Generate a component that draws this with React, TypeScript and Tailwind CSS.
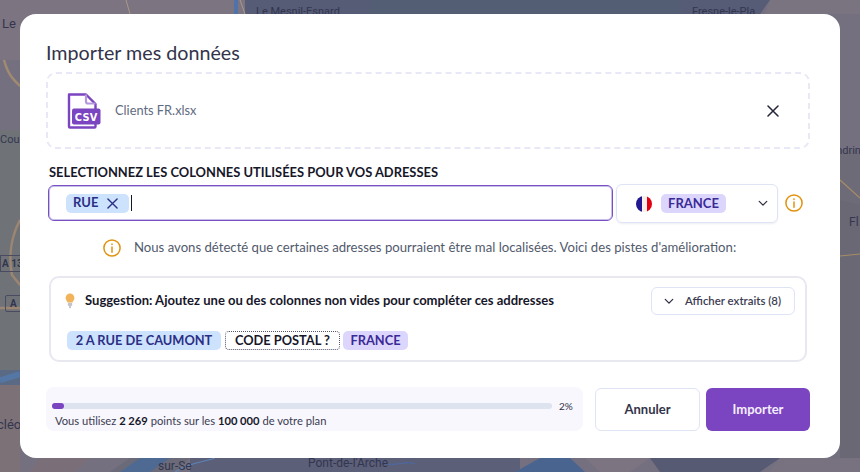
import React from "react";

const mapText = "absolute text-[#33364f] font-['Roboto',sans-serif] whitespace-nowrap";

function MapBackground() {
  return (
    <div className="absolute inset-0 overflow-hidden bg-[#767080]">
      <svg width="860" height="472" viewBox="0 0 860 472" className="absolute inset-0">
        <rect width="860" height="472" fill="#757080" />
        <path d="M0 0H250V60H0Z" fill="#7c7480" />
        <path d="M245 0H690V14H245Z" fill="#565b76" />
        <path d="M370 0H680V14H370Z" fill="#535d74" />
        <path d="M690 0H770L760 14H685Z" fill="#565b76" />
        <path d="M770 0H860V14H765Z" fill="#797480" />
        <path d="M0 130H20V370H0Z" fill="#6f7378" />
        <path d="M0 370H20V385H0Z" fill="#5a6a85" />
        <path d="M0 385H20V472H0Z" fill="#7d7178" />
        <path d="M840 150H860V472H840Z" fill="#6e6b78" />
        <path d="M840 200L860 205V470H840Z" fill="#6a6875" />
        <path d="M40 458H90L75 472H30Z" fill="#7a6f78" />
        <path d="M130 458H190L175 472H110Z" fill="#6a6a78" />
        <path d="M190 458H520V472H190Z" fill="#5c5f78" />
        <path d="M120 472L140 458H170L150 472Z" fill="#4f6a92" />
        <path d="M515 472L540 458H570L585 472Z" fill="#4a6490" />
        <path d="M585 458H650L630 472H600Z" fill="#7c7480" />
        <path d="M650 458H780L760 472H660Z" fill="#565a72" />
        <path d="M780 458H860V472H770Z" fill="#787280" />
        <path d="M0 380C8 378 14 376 20 374" stroke="#5577a5" strokeWidth="6" fill="none" />
        <path d="M4 60C8 75 14 80 20 86" stroke="#a08a70" strokeWidth="2.5" fill="none" />
        <path d="M20 220C12 235 8 255 12 275L20 285" stroke="#9c8672" strokeWidth="2.5" fill="none" />
        <path d="M0 308H20" stroke="#9c8672" strokeWidth="2.5" />
        <path d="M840 180L860 198" stroke="#a88c68" strokeWidth="1.2" fill="none" />
        <path d="M840 256L860 254" stroke="#a88c68" strokeWidth="1.2" fill="none" />
        <path d="M240 0L245 14M126 0L130 14" stroke="#a89a88" strokeWidth="1" />
        <path d="M236 0V14" stroke="#4f72a8" strokeWidth="4" />
        <path d="M175 472C190 462 205 462 215 458" stroke="#5b84b8" strokeWidth="1.2" fill="none" />
        <path d="M380 462C395 468 405 460 415 464" stroke="#4070c0" strokeWidth="1" strokeDasharray="2 1" fill="none" />
      </svg>
      <span className={`${mapText} left-[2px] top-[14px] text-[13px]`}>Le</span>
      <span className={`${mapText} left-[256px] top-[4px] text-[11px]`}>Le Mesnil-Esnard</span>
      <span className={`${mapText} left-[692px] top-[4px] text-[11px]`}>Fresne-le-Pla</span>
      <span className={`${mapText} left-0 top-[132px] text-[11px]`}>Cou</span>
      <span className={`${mapText} left-0 top-[255px] text-[10px] font-bold px-[1px] border border-[#4a4a60]`}>A 139</span>
      <span className={`${mapText} left-[5px] top-[295px] text-[10px] font-bold px-[4px] border border-[#4a4a60] rounded-[2px]`}>A 13</span>
      <span className={`${mapText} left-[-3px] top-[415px] text-[13px]`}>cléon</span>
      <span className={`${mapText} left-[158px] top-[457px] text-[12px]`}>sur-Se</span>
      <span className={`${mapText} left-[308px] top-[454px] text-[12px]`}>Pont-de-l'Arche</span>
      <span className={`${mapText} left-[829px] top-[143px] text-[11px]`}>Andrin</span>
      <span className={`${mapText} left-[849px] top-[213px] text-[12px]`}>Fl</span>
    </div>
  );
}

function Info({ className }: { className: string }) {
  return (
    <svg viewBox="0 0 18 18" className={className} fill="none" stroke="#e0930f" strokeWidth="1.5" strokeLinecap="round">
      <circle cx="9" cy="9" r="8.1" />
      <path d="M9 8v5.2" />
      <path d="M9 4.9v.6" />
    </svg>
  );
}

function CsvIcon() {
  return (
    <svg width="34" height="36" viewBox="0 0 34 36" className="shrink-0">
      <path d="M2 1.5H19L28.5 11V33.5a1 1 0 0 1-1 1H3a1 1 0 0 1-1-1Z" fill="none" stroke="#7b44c0" strokeWidth="2.4" strokeLinejoin="round" />
      <path d="M19 1.5V8.5a2 2 0 0 0 2 2H28.5" fill="none" stroke="#b597de" strokeWidth="2.2" />
      <rect x="5" y="15.5" width="28.5" height="16" rx="2" fill="#7b44c0" />
      <text x="19.2" y="27.6" textAnchor="middle" fontFamily="'DejaVu Sans',sans-serif" fontWeight="700" fontSize="9.8" fill="#fff" letterSpacing="0.3">CSV</text>
    </svg>
  );
}

function Flag() {
  return (
    <svg width="16" height="16" viewBox="0 0 16 16" className="shrink-0">
      <defs>
        <clipPath id="flag"><circle cx="8" cy="8" r="8" /></clipPath>
      </defs>
      <g clipPath="url(#flag)">
        <rect width="6" height="16" fill="#22188f" />
        <rect x="6" width="5" height="16" fill="#f8f0ea" />
        <rect x="11" width="5" height="16" fill="#e3000f" />
      </g>
    </svg>
  );
}

function Chevron({ className }: { className: string }) {
  return (
    <svg viewBox="0 0 12 8" className={className} fill="none" stroke="#2c2c44" strokeWidth="1.5" strokeLinecap="round" strokeLinejoin="round">
      <path d="M1.5 1.5 6 6l4.5-4.5" />
    </svg>
  );
}

function Bulb() {
  return (
    <svg width="10" height="16" viewBox="0 0 10 16" className="shrink-0">
      <path d="M5 .5a4.4 4.4 0 0 1 4.4 4.4c0 1.9-1.4 2.9-2 4.6H2.6C2 7.8.6 6.8.6 4.9A4.4 4.4 0 0 1 5 .5Z" fill="#f2b45a" />
      <rect x="2.8" y="9.8" width="4.4" height="3.2" rx="1" fill="#c6c2cc" />
      <path d="M3.8 13.6h2.4L5 15.5Z" fill="#9a96a4" />
    </svg>
  );
}

export default function App() {
  return (
    <div className="relative h-[472px] w-[860px] overflow-hidden font-['Lato',sans-serif]">
      <MapBackground />
      <div className="relative z-10 mx-[20px] mt-[14px] flex h-[444px] w-[820px] flex-col rounded-[16px] bg-white pl-[26px] pr-[30px]">
        <h1 className="mt-[26px] h-[25px] text-[19.7px] leading-[25px] text-[#33334a]">Importer mes données</h1>
        <div className="mt-[7px] flex h-[77px] items-center rounded-[10px] border-2 border-dashed border-[#e8e8f6] pl-[19px] pr-[29px]">
          <CsvIcon />
          <span className="ml-[14px] pt-[1px] text-[12.8px] text-[#5f6b80]">Clients FR.xlsx</span>
          <svg viewBox="0 0 12 12" className="ml-auto h-[12px] w-[12px]" fill="none" stroke="#24243a" strokeWidth="1.5" strokeLinecap="round">
            <path d="M1 1l10 10M11 1 1 11" />
          </svg>
        </div>
        <div className="ml-[3px] mt-[15px] h-[16px] whitespace-nowrap text-[12.9px] font-bold leading-[16px] text-[#17172a]">SELECTIONNEZ LES COLONNES UTILISÉES POUR VOS ADRESSES</div>
        <div className="ml-[2px] mt-[4px] flex items-center">
          <div className="mt-[-1px] flex h-[36px] w-[565px] items-center rounded-[6px] border border-[#7b4fc4] pl-[17px] shadow-[inset_0_0_0_1px_#c5c0ea]">
            <span className="flex h-[19px] w-[63px] items-center rounded-[5px] bg-[#cde2fd] pl-[7px] text-[13px] font-bold text-[#2b2f85]">
              RUE
              <svg viewBox="0 0 12 12" className="ml-[9px] h-[11px] w-[11px]" fill="none" stroke="#2b2f85" strokeWidth="1.5" strokeLinecap="round">
                <path d="M1 1l10 10M11 1 1 11" />
              </svg>
            </span>
            <span className="ml-[2px] h-[16px] w-[1px] bg-[#17172a]" />
          </div>
          <div className="ml-[3px] flex h-[39px] w-[162px] items-center rounded-[6px] border border-[#dfe3f6] pl-[19px] pr-[9px] shadow-[0_1px_2px_rgba(40,40,120,0.08)]">
            <Flag />
            <span className="ml-[9px] flex h-[19px] w-[65px] items-center justify-center rounded-[5px] bg-[#dcd6fd] text-[13px] font-bold text-[#3a2a96]">FRANCE</span>
            <Chevron className="ml-auto h-[7px] w-[10px]" />
          </div>
          <Info className="mb-[2px] ml-[7px] h-[18px] w-[18px]" />
        </div>
        <div className="ml-[57px] mt-[16px] flex h-[18px] items-center whitespace-nowrap">
          <Info className="h-[18px] w-[18px]" />
          <span className="ml-[13px] text-[13.15px] text-[#525a6c]">Nous avons détecté que certaines adresses pourraient être mal localisées. Voici des pistes d'amélioration:</span>
        </div>
        <div className="ml-[3px] mt-[19px] flex h-[86px] w-[758px] flex-col rounded-[10px] border-2 border-[#e8e8f0] pl-[14px] pr-[10px]">
          <div className="mt-[9px] flex items-center">
            <Bulb />
            <span className="ml-[10px] whitespace-nowrap text-[13.05px] font-bold text-[#17172a]">Suggestion: Ajoutez une ou des colonnes non vides pour compléter ces addresses</span>
            <button className="ml-auto flex h-[28px] w-[144px] items-center rounded-[6px] border border-[#dfe3f6] pl-[12px] text-[11.4px] font-semibold text-[#3c3c52]">
              <Chevron className="h-[7px] w-[10px]" />
              <span className="ml-[11px] whitespace-nowrap">Afficher extraits (8)</span>
            </button>
          </div>
          <div className="ml-[2px] mt-[16px] flex items-center whitespace-nowrap text-[12.8px] font-bold">
            <span className="flex h-[19px] w-[154px] items-center justify-center rounded-[5px] bg-[#cde2fd] text-[#2b2f85]">2 A RUE DE CAUMONT</span>
            <span className="ml-[4px] flex h-[19px] w-[115px] items-center justify-center rounded-[4px] border border-dotted border-[#55556a] text-[#17172a]">CODE POSTAL ?</span>
            <span className="ml-[3px] flex h-[19px] w-[65px] items-center justify-center rounded-[5px] bg-[#dcd6fd] text-[#3a2a96]">FRANCE</span>
          </div>
        </div>
        <div className="mt-[25px] flex items-start">
          <div className="flex h-[44px] w-[537px] flex-col rounded-[8px] bg-[#f7f7fd] pl-[6px]">
            <div className="mt-[13px] flex items-center">
              <div className="h-[6px] w-[500px] rounded-full bg-[#dde3ef]">
                <div className="h-[6px] w-[12px] rounded-full bg-[#7b44c0]" />
              </div>
              <span className="ml-[7px] text-[10px] leading-[12px] text-[#33334a]">2%</span>
            </div>
            <div className="ml-[3px] mt-[1px] whitespace-nowrap text-[11.2px] leading-[16px] text-[#3c3c52]">
              Vous utilisez <b className="text-[#17172a]">2 269</b> points sur les <b className="text-[#17172a]">100 000</b> de votre plan
            </div>
          </div>
          <button className="ml-[12px] mt-[1px] h-[43px] w-[105px] rounded-[6px] border border-[#dfe3f6] text-[13px] font-bold text-[#33334a]">Annuler</button>
          <button className="ml-[6px] mt-[1px] h-[43px] w-[104px] rounded-[6px] bg-[#7b44c0] text-[13px] font-bold text-[#f4eefc]">Importer</button>
        </div>
      </div>
    </div>
  );
}
